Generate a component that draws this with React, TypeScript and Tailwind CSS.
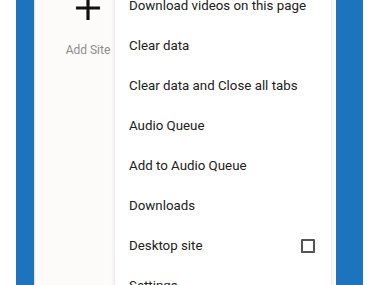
import React from "react"

const items = [
  "Download videos on this page",
  "Clear data",
  "Clear data and Close all tabs",
  "Audio Queue",
  "Add to Audio Queue",
  "Downloads",
  "Desktop site",
  "Settings",
]

export default function App() {
  return (
    <div
      className="flex h-[285px] w-[380px] overflow-hidden bg-white"
      style={{ fontFamily: "Roboto, 'Noto Sans', sans-serif" }}
    >
      <div className="w-[16px] shrink-0 bg-white" />
      <div className="w-[18px] shrink-0 bg-[#1b74bd]" />
      <div className="relative w-[302px] shrink-0 border-l border-[#d8e6f0] bg-[#fdfbf9]">
        {/* add site tile */}
        <div className="ml-[30px] flex w-[46px] flex-col items-center">
          <svg width="26" height="26" viewBox="0 0 26 26" className="-mt-[5px]">
            <path d="M13 1v24M1 13h24" stroke="#111" strokeWidth="3.2" />
          </svg>
          <span className="mt-[20px] text-[12px] text-[#8c8c8c]">Add Site</span>
        </div>

        {/* overflow menu */}
        <div className="absolute left-[80px] top-[-14px] w-[216px] bg-white shadow-[0_0_4px_rgba(0,0,0,0.12)]">
          {items.map((label) => (
            <div key={label} className="flex h-10 items-center justify-between pl-[14px] pr-[16px]">
              <span className="text-[13.3px] text-[#202020]">{label}</span>
              {label === "Desktop site" && (
                <span className="h-[14px] w-[14px] rounded-[1px] border-2 border-[#555]" />
              )}
            </div>
          ))}
        </div>
      </div>
      <div className="w-[27px] shrink-0 bg-[#1b74bd]" />
      <div className="flex-1 bg-white" />
    </div>
  )
}
